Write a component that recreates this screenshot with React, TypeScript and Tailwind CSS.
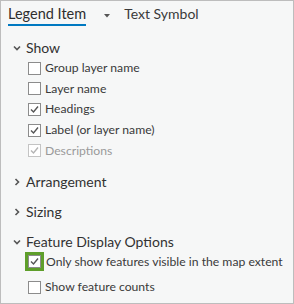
import React from 'react';

const font = { fontFamily: 'Lato, "Open Sans", sans-serif' };

const Chevron = ({ open }: { open: boolean }) => (
  <svg width="8" height="8" viewBox="0 0 8 8" className="shrink-0">
    {open ? (
      <path d="M1 2.5 L4 5.5 L7 2.5" fill="none" stroke="#555" strokeWidth="1.6" />
    ) : (
      <path d="M2.5 1 L5.5 4 L2.5 7" fill="none" stroke="#555" strokeWidth="1.6" />
    )}
  </svg>
);

const Box = ({ checked, disabled }: { checked?: boolean; disabled?: boolean }) => (
  <div
    className={`w-[13px] h-[13px] border bg-white flex items-center justify-center shrink-0 ${
      disabled ? 'border-[#c4c4c4]' : 'border-[#8c8c8c]'
    }`}
  >
    {checked && (
      <svg width="11" height="11" viewBox="0 0 11 11">
        <path
          d="M2 5.5 L4.5 8 L9 2.5"
          fill="none"
          stroke={disabled ? '#b4b4b4' : '#555'}
          strokeWidth="1.4"
        />
      </svg>
    )}
  </div>
);

const Header = ({ label, open, className = '' }: { label: string; open: boolean; className?: string }) => (
  <div className={`flex items-center h-[20px] pl-[12px] gap-[5px] ${className}`}>
    <Chevron open={open} />
    <span className="text-[14px] text-[#323232] leading-none whitespace-nowrap">{label}</span>
  </div>
);

const Row = ({
  label,
  checked,
  disabled,
}: {
  label: string;
  checked?: boolean;
  disabled?: boolean;
}) => (
  <div className="flex items-center h-[20.6px] pl-[27px] gap-[4px]">
    <Box checked={checked} disabled={disabled} />
    <span className={`text-[12.2px] leading-none whitespace-nowrap ${disabled ? 'text-[#9a9a9a]' : 'text-[#3a3a3a]'}`}>
      {label}
    </span>
  </div>
);

export default function App() {
  return (
    <div className="w-[294px] h-[304px] border border-[#bdbdbd] bg-[#f6f7f7] overflow-hidden" style={font}>
      {/* Tabs */}
      <div className="flex items-start pl-[7px] pt-[4px] h-[37px]">
        <div className="flex flex-col">
          <span className="text-[14.5px] text-[#2e2e2e] leading-[17px]">Legend Item</span>
          <div className="h-[2px] bg-[#0079c1] mt-[2px]" />
        </div>
        <svg width="6" height="4" viewBox="0 0 6 4" className="ml-[18px] mt-[9px]">
          <path d="M0 0 L6 0 L3 3.5 Z" fill="#555" />
        </svg>
        <span className="ml-[14px] text-[14px] text-[#3a3a3a] leading-[17px]">Text Symbol</span>
      </div>

      {/* Show */}
      <Header label="Show" open />
      <Row label="Group layer name" />
      <Row label="Layer name" />
      <Row label="Headings" checked />
      <Row label="Label (or layer name)" checked />
      <Row label="Descriptions" checked disabled />

      <Header label="Arrangement" open={false} className="mt-[11px]" />
      <Header label="Sizing" open={false} className="mt-[10px]" />
      <Header label="Feature Display Options" open className="mt-[10px]" />

      <div className="flex items-center h-[20px] pl-[24px] gap-[2px]">
        <div className="w-[19px] h-[19px] border-[3px] border-[#5e9e2a] flex items-center justify-center shrink-0">
          <Box checked />
        </div>
        <span className="text-[12.2px] text-[#3a3a3a] leading-none whitespace-nowrap">
          Only show features visible in the map extent
        </span>
      </div>
      <div className="mt-[5px]">
        <Row label="Show feature counts" />
      </div>
    </div>
  );
}
